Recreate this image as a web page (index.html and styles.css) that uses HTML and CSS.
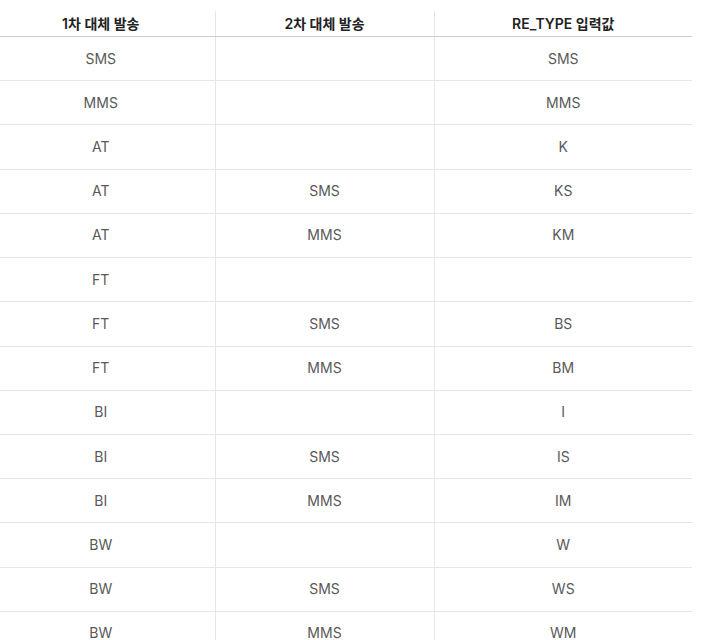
FILE: index.html
```html
<!DOCTYPE html>
<html lang="ko">
<head>
<meta charset="utf-8">
<link rel="stylesheet" href="styles.css">
</head>
<body>
<table class="tbl">
  <colgroup><col class="c1"><col class="c2"><col class="c3"></colgroup>
  <thead>
    <tr><th>1차 대체 발송</th><th>2차 대체 발송</th><th>RE_TYPE 입력값</th></tr>
  </thead>
  <tbody>
    <tr><td>SMS</td><td></td><td>SMS</td></tr>
    <tr><td>MMS</td><td></td><td>MMS</td></tr>
    <tr><td>AT</td><td></td><td>K</td></tr>
    <tr><td>AT</td><td>SMS</td><td>KS</td></tr>
    <tr><td>AT</td><td>MMS</td><td>KM</td></tr>
    <tr><td>FT</td><td></td><td></td></tr>
    <tr><td>FT</td><td>SMS</td><td>BS</td></tr>
    <tr><td>FT</td><td>MMS</td><td>BM</td></tr>
    <tr><td>BI</td><td></td><td>I</td></tr>
    <tr><td>BI</td><td>SMS</td><td>IS</td></tr>
    <tr><td>BI</td><td>MMS</td><td>IM</td></tr>
    <tr><td>BW</td><td></td><td>W</td></tr>
    <tr><td>BW</td><td>SMS</td><td>WS</td></tr>
    <tr><td>BW</td><td>MMS</td><td>WM</td></tr>
  </tbody>
</table>
</body>
</html>
```
FILE: styles.css
```css
html, body {
  margin: 0;
  padding: 0;
  background: #fff;
}
body {
  font-family: Inter, "Noto Sans CJK KR", sans-serif;
  font-size: 14px;
  padding-top: 11px;
}
.tbl {
  border-collapse: collapse;
  table-layout: fixed;
  width: 692px;
}
.c1 { width: 215px; }
.c2 { width: 219px; }
.c3 { width: 258px; }
.tbl th {
  height: 25px;
  padding: 0;
  font-weight: 600;
  color: #222;
  text-align: center;
  vertical-align: middle;
  border-bottom: 1px solid #cccccc;
  line-height: 20px;
}
.tbl td {
  height: 43.23px;
  padding: 0;
  color: #595959;
  text-align: center;
  vertical-align: middle;
  border-bottom: 1px solid #e6e6e6;
  line-height: 20px;
}
.tbl th:first-child,
.tbl td:first-child {
  padding-right: 13px;
}
.tbl th + th,
.tbl td + td {
  border-left: 1px solid #e6e6e6;
}
```
